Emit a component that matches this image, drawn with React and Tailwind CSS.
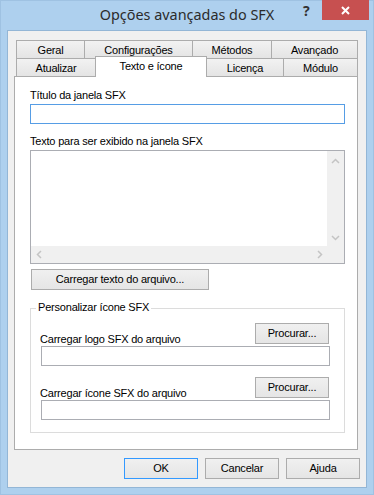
import React from 'react';

const ui = "font-['Liberation_Sans',Arial,sans-serif] text-[11px] leading-[13px] tracking-[-0.2px] text-black";
const tab = 'h-[18px] border border-b-0 border-[#acacac] bg-linear-to-b from-[#f2f2f2] to-[#e4e4e4] flex items-center justify-center pt-px';
const btn = 'h-[21px] border bg-linear-to-b from-[#f0f0f0] to-[#e5e5e5] flex items-center justify-center';

const Chevron = ({ d }) => (
  <svg width="9" height="9" viewBox="0 0 9 9">
    <polyline points={d} fill="none" stroke="#c4c4c4" strokeWidth="1.5" />
  </svg>
);

const Dialog = () => (
  <div className={`relative w-[374px] h-[495px] bg-[#aed0ee] border border-[#9fc2e2] pt-[29px] px-[6px] pb-[6px] ${ui}`}>
    {/* title bar */}
    <div className="absolute top-[4px] left-0 right-0 text-center font-['Noto_Sans',sans-serif] text-[14.4px] leading-[20px] tracking-normal text-[#2b2b2b]">
      Opções avançadas do SFX
    </div>
    <div className="absolute top-[1px] left-[302px] font-['Noto_Sans',sans-serif] font-bold text-[14px] leading-[18px] text-[#333]">
      ?
    </div>
    <div className="absolute -top-px right-[4px] w-[47px] h-[20px] bg-[#c75050] flex items-center justify-center">
      <svg width="9" height="9" viewBox="0 0 9 9">
        <path d="M1 1L8 8M8 1L1 8" stroke="#fff" strokeWidth="2" />
      </svg>
    </div>

    {/* client area */}
    <div className="w-[360px] h-[458px] border border-[#93b6d6] bg-[#f0f0f0] pt-[9px] flex flex-col">
      <div className="flex ml-[8px]">
        <div className={`w-[69px] ${tab}`}>Geral</div>
        <div className={`-ml-px w-[109px] ${tab}`}>Configurações</div>
        <div className={`-ml-px w-[80px] ${tab}`}>Métodos</div>
        <div className={`-ml-px w-[87px] ${tab}`}>Avançado</div>
      </div>
      <div className="flex items-start h-[18px] ml-[8px]">
        <div className={`w-[80px] ${tab}`}>Atualizar</div>
        <div className="relative z-10 -ml-px -mt-[2px] w-[112px] h-[21px] border border-b-0 border-[#acacac] bg-white flex justify-center pt-[3px]">
          Texto e ícone
        </div>
        <div className={`-ml-px w-[78px] ${tab}`}>Licença</div>
        <div className={`-ml-px w-[75px] ${tab}`}>Módulo</div>
      </div>

      <div className="ml-[6px] w-[344px] h-[374px] border border-[#acacac] bg-white pl-[15px] pr-[12px] pt-[12px] pb-[16px] flex flex-col">
        <div>Título da janela SFX</div>
        <div className="mt-[2px] h-[20px] border border-[#569de5] bg-white" />
        <div className="mt-[11px]">Texto para ser exibido na janela SFX</div>
        <div className="mt-[2px] h-[114px] border border-[#abadb3] flex flex-col">
          <div className="flex flex-1">
            <div className="flex-1 bg-white" />
            <div className="w-[17px] bg-[#f0f0f0] flex flex-col justify-between items-center pt-[6px] pb-[4px]">
              <Chevron d="1,6 4.5,2.5 8,6" />
              <Chevron d="1,3 4.5,6.5 8,3" />
            </div>
          </div>
          <div className="h-[17px] flex bg-[#f0f0f0] items-center justify-between pl-[4px] pr-[20px]">
            <Chevron d="6,1 2.5,4.5 6,8" />
            <Chevron d="3,1 6.5,4.5 3,8" />
          </div>
        </div>
        <div className={`mt-[5px] ml-px w-[178px] border-[#acacac] ${btn}`}>Carregar texto do arquivo...</div>

        <div className="relative mt-[18px] h-[125px] border border-[#dcdcdc] pt-[14px]">
          <span className="absolute left-[5px] -top-[8px] bg-white px-[2px]">Personalizar ícone SFX</span>
          <div className="ml-[9px] mr-[15px] flex justify-between items-end">
            <span>Carregar logo SFX do arquivo</span>
            <div className={`mb-[2px] w-[74px] border-[#acacac] ${btn}`}>Procurar...</div>
          </div>
          <div className="ml-[10px] mr-[14px] h-[20px] border border-[#abadb3]" />
          <div className="mt-[11px] ml-[9px] mr-[15px] flex justify-between items-end">
            <span>Carregar ícone SFX do arquivo</span>
            <div className={`mb-[2px] w-[74px] border-[#acacac] ${btn}`}>Procurar...</div>
          </div>
          <div className="ml-[10px] mr-[14px] h-[20px] border border-[#abadb3]" />
        </div>
      </div>

      <div className="mt-[8px] mr-[6px] flex justify-end gap-[7px]">
        <div className={`w-[74px] border-[#3399ff] ${btn}`}>OK</div>
        <div className={`w-[74px] border-[#acacac] ${btn}`}>Cancelar</div>
        <div className={`w-[74px] border-[#acacac] ${btn}`}>Ajuda</div>
      </div>
    </div>
  </div>
);

export default function App() {
  return <Dialog />;
}
